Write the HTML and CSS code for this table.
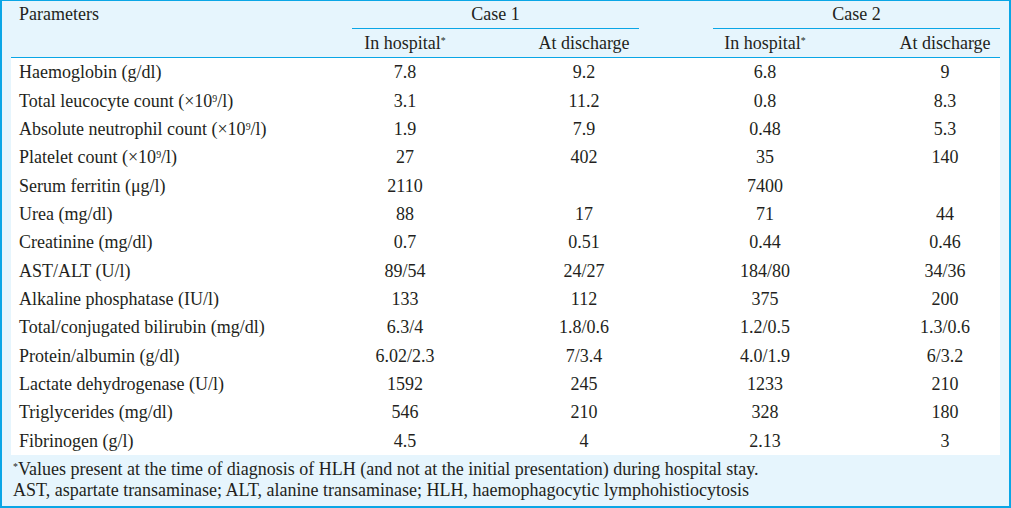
FILE: index.html
```html
<!DOCTYPE html>
<html>
<head>
<meta charset="utf-8">
<link rel="stylesheet" href="styles.css">
</head>
<body>
<div class="frame">
  <table class="data">
    <colgroup>
      <col class="c-param"><col class="c-a1"><col class="c-gap1"><col class="c-b1"><col class="c-mid"><col class="c-a2"><col class="c-gap2"><col class="c-b2">
    </colgroup>
    <thead>
      <tr class="h1">
        <th class="left">Parameters</th>
        <th colspan="3" class="case">Case 1</th>
        <th></th>
        <th colspan="3" class="case">Case 2</th>
      </tr>
      <tr class="h2">
        <th></th>
        <th>In hospital<sup>*</sup></th>
        <th></th>
        <th>At discharge</th>
        <th></th>
        <th>In hospital<sup>*</sup></th>
        <th></th>
        <th>At discharge</th>
      </tr>
    </thead>
    <tbody>
      <tr><td class="left">Haemoglobin (g/dl)</td><td>7.8</td><td></td><td>9.2</td><td></td><td>6.8</td><td></td><td>9</td></tr>
      <tr><td class="left">Total leucocyte count (×10<sup>9</sup>/l)</td><td>3.1</td><td></td><td>11.2</td><td></td><td>0.8</td><td></td><td>8.3</td></tr>
      <tr><td class="left">Absolute neutrophil count (×10<sup>9</sup>/l)</td><td>1.9</td><td></td><td>7.9</td><td></td><td>0.48</td><td></td><td>5.3</td></tr>
      <tr><td class="left">Platelet count (×10<sup>9</sup>/l)</td><td>27</td><td></td><td>402</td><td></td><td>35</td><td></td><td>140</td></tr>
      <tr><td class="left">Serum ferritin (μg/l)</td><td>2110</td><td></td><td></td><td></td><td>7400</td><td></td><td></td></tr>
      <tr><td class="left">Urea (mg/dl)</td><td>88</td><td></td><td>17</td><td></td><td>71</td><td></td><td>44</td></tr>
      <tr><td class="left">Creatinine (mg/dl)</td><td>0.7</td><td></td><td>0.51</td><td></td><td>0.44</td><td></td><td>0.46</td></tr>
      <tr><td class="left">AST/ALT (U/l)</td><td>89/54</td><td></td><td>24/27</td><td></td><td>184/80</td><td></td><td>34/36</td></tr>
      <tr><td class="left">Alkaline phosphatase (IU/l)</td><td>133</td><td></td><td>112</td><td></td><td>375</td><td></td><td>200</td></tr>
      <tr><td class="left">Total/conjugated bilirubin (mg/dl)</td><td>6.3/4</td><td></td><td>1.8/0.6</td><td></td><td>1.2/0.5</td><td></td><td>1.3/0.6</td></tr>
      <tr><td class="left">Protein/albumin (g/dl)</td><td>6.02/2.3</td><td></td><td>7/3.4</td><td></td><td>4.0/1.9</td><td></td><td>6/3.2</td></tr>
      <tr><td class="left">Lactate dehydrogenase (U/l)</td><td>1592</td><td></td><td>245</td><td></td><td>1233</td><td></td><td>210</td></tr>
      <tr><td class="left">Triglycerides (mg/dl)</td><td>546</td><td></td><td>210</td><td></td><td>328</td><td></td><td>180</td></tr>
      <tr><td class="left">Fibrinogen (g/l)</td><td>4.5</td><td></td><td>4</td><td></td><td>2.13</td><td></td><td>3</td></tr>
    </tbody>
  </table>
  <div class="notes">
    <p><sup>*</sup>Values present at the time of diagnosis of HLH (and not at the initial presentation) during hospital stay.</p>
    <p>AST, aspartate transaminase; ALT, alanine transaminase; HLH, haemophagocytic lymphohistiocytosis</p>
  </div>
</div>
</body>
</html>
```
FILE: styles.css
```css
html, body {
  margin: 0;
  padding: 0;
  background: #ffffff;
  font-family: "Liberation Serif";
}
.frame, .frame * {
  font-family: "Liberation Serif";
}
.frame {
  box-sizing: border-box;
  width: 1011px;
  height: 508px;
  border-style: solid;
  border-color: #0aa6e6;
  border-width: 1px 2px 2px 2px;
  background: #e6f5fd;
  padding: 0 9px;
  color: #231f20;
  font-size: 18px;
}
.data {
  width: 989px;
  border-collapse: collapse;
  table-layout: fixed;
  font-size: 18px;
}
.c-param { width: 341px; }
.c-a1 { width: 106px; }
.c-gap1 { width: 71px; }
.c-b1 { width: 110px; }
.c-mid { width: 74px; }
.c-a2 { width: 104px; }
.c-gap2 { width: 73px; }
.c-b2 { width: 110px; }
.data th, .data td {
  padding: 0;
  font-weight: normal;
  font-size: 18px;
  text-align: center;
  white-space: nowrap;
}
.data .left {
  text-align: left;
  padding-left: 8px;
}
.h1 th {
  height: 27px;
  line-height: 27px;
  vertical-align: middle;
}
.h1 th.case {
  border-bottom: 1px solid #0aa6e6;
}
.h2 th {
  height: 28px;
  line-height: 28px;
  border-bottom: 1px solid #0aa6e6;
}
.data tbody {
  background: #ffffff;
}
.data tbody td {
  height: 28.36px;
  line-height: 28px;
}
sup {
  font-size: 0.55em;
  line-height: 0;
  vertical-align: 0.55em;
}
.notes {
  padding: 4px 0 0 2px;
}
.notes p {
  margin: 0;
  line-height: 21px;
}
```
